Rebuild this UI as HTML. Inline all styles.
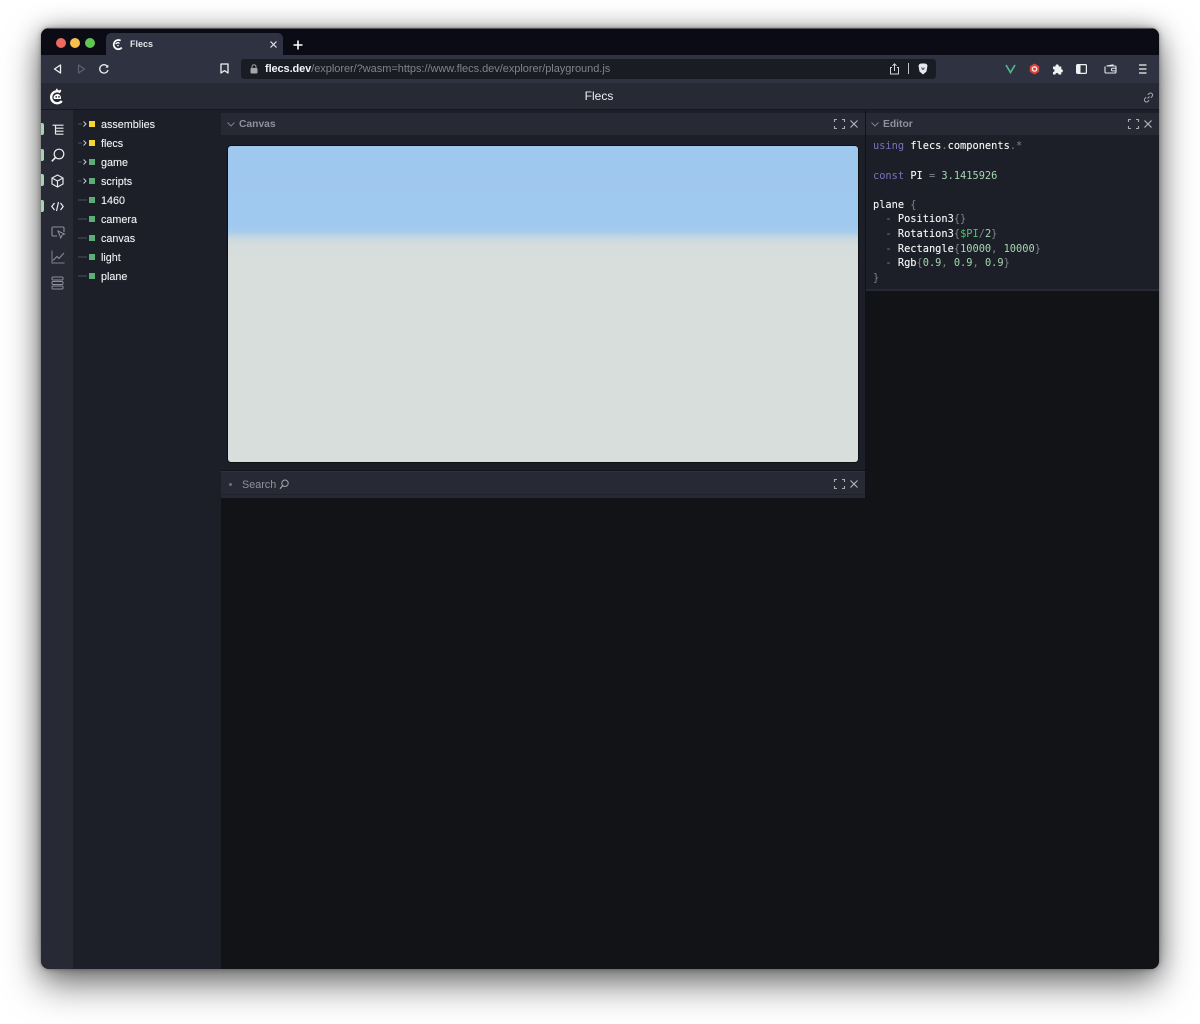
<!DOCTYPE html>
<html><head><meta charset="utf-8"><style>
html,body{margin:0;padding:0;background:#fff}
body{width:1200px;height:1024px;overflow:hidden;position:relative;font-family:"Liberation Sans",sans-serif}
.a{position:absolute}
#win{position:absolute;left:41px;top:28px;width:1118px;height:941px;border-radius:8px;overflow:hidden;background:#111317}
#shadow{position:absolute;left:41px;top:28px;width:1118px;height:941px;border-radius:8px;box-shadow:0 0 1px #666,0 0 6px rgba(0,0,0,.3),0 0 24px rgba(0,0,0,.28),0 16px 36px rgba(0,0,0,.5)}
.t{position:absolute;white-space:pre;line-height:16px}
.tree{font-size:10.8px;color:#eceef1;text-shadow:0 0 .5px rgba(236,238,241,.7)}
.sq{position:absolute;left:48px;width:6px;height:6px}
.bar{position:absolute;left:0;width:3px;height:12px;background:#9fd8b0;border-radius:0 2px 2px 0}
.code{position:absolute;left:873px;font:10.33px/14.6px "DejaVu Sans Mono",monospace;white-space:pre;color:#7f838d;top:0}
.w{color:#f4f5f6;text-shadow:0 0 .4px rgba(244,245,246,.7)}.p{color:#7e6fc0}.g{color:#a5d6b0}.gg{color:#4cc46e}
svg{position:absolute;overflow:visible;fill:none}
.panel-t{font-size:10.3px;font-weight:bold;color:#8f929c}
</style></head><body>
<div id="shadow"></div>
<div id="win">
<div class="a" style="left:0;top:0;width:1118px;height:27px;background:#0a0b14"></div>
<div class="a" style="left:0;top:0;width:1118px;height:1px;background:#555"></div>
<div class="a" style="left:65px;top:5px;width:177px;height:22px;background:#2f3241;border-radius:5px 5px 0 0"></div>
<div class="a" style="left:0;top:27px;width:1118px;height:28px;background:#2f3241"></div>
<div class="a" style="left:0;top:55px;width:1118px;height:26px;background:#272a35"></div>
<div class="a" style="left:0;top:81px;width:1118px;height:1px;background:#16181e"></div>
<div class="a" style="left:0;top:82px;width:32px;height:859px;background:#272a35"></div>
<div class="a" style="left:32px;top:82px;width:148px;height:859px;background:#1c1f27"></div>
<div class="a" style="left:180px;top:82px;width:938px;height:859px;background:#111317"></div>
<div class="a" style="left:180px;top:82px;width:644px;height:360px;background:#1c1f27"></div>
<div class="a" style="left:180px;top:85px;width:644px;height:22px;background:#272a35"></div>
<div class="a" style="left:180px;top:443px;width:644px;height:27px;background:#272a35;border-top:1px solid #2f3240;box-sizing:border-box"></div>
<div class="a" style="left:180px;top:466px;width:644px;height:1px;background:#1f2229"></div>
<div class="a" style="left:825px;top:82px;width:293px;height:179px;background:#1c1f27"></div>
<div class="a" style="left:825px;top:85px;width:293px;height:22px;background:#272a35"></div>
<div class="a" style="left:825px;top:261px;width:293px;height:2px;background:#272a35"></div>
<div class="a" style="left:187px;top:118px;width:630px;height:316px;border-radius:3px;background:linear-gradient(180deg,#9fc8ef 0,#a0c9ef 80px,#a8cdec 86px,#c8d8e2 92px,#d6dddc 100px,#d8dedb 130px,#d8dedb 100%);box-shadow:0 0 0 .5px #000"></div>
</div>

<div class="a" style="left:56px;top:38px;width:10px;height:10px;border-radius:50%;background:#ec6a5e"></div>
<div class="a" style="left:70px;top:38px;width:10px;height:10px;border-radius:50%;background:#f4bf4f"></div>
<div class="a" style="left:85px;top:38px;width:10px;height:10px;border-radius:50%;background:#61c554"></div>

<!-- tab -->
<svg style="left:112px;top:38px" width="12" height="13" viewBox="0 0 12 13"><path d="M9.8 9.6A4.6 4.6 0 1 1 8.6 2.6" stroke="#fff" stroke-width="1.8"/><path d="M3.8 6.2a2 2 0 0 1 3.6-.6" stroke="#fff" stroke-width="1.3"/><circle cx="6" cy="7.6" r=".8" fill="#fff"/></svg>
<div class="t" style="left:130px;top:36px;font-size:9px;font-weight:bold;color:#e6e7ea">Flecs</div>
<svg style="left:270px;top:41px" width="7" height="7"><path d="M.5.5l6 6M6.500.5l-6 6" stroke="#e6e7ea" stroke-width="1.200"/></svg>
<svg style="left:293px;top:40px" width="10" height="10"><path d="M5 .5v9M.5 5h9" stroke="#fff" stroke-width="1.600"/></svg>

<!-- toolbar -->
<svg style="left:53px;top:64px" width="9" height="10"><path d="M7.500 1L1.500 5l6 4z" stroke="#f0f1f3" stroke-width="1.300" stroke-linejoin="round"/></svg>
<svg style="left:77px;top:64px" width="9" height="10"><path d="M1.500 1l6 4-6 4z" stroke="#5f6270" stroke-width="1.200" stroke-linejoin="round"/></svg>
<svg style="left:99px;top:64px" width="10" height="10"><path d="M8.700 3A4.200 4.200 0 1 0 9 6" stroke="#f0f1f3" stroke-width="1.300"/><path d="M9.300.6v3H6.300z" fill="#f0f1f3"/></svg>
<svg style="left:220px;top:63px" width="9" height="11"><path d="M1 1h7v9L4.500 7.600 1 10z" stroke="#f0f1f3" stroke-width="1.300" stroke-linejoin="round"/></svg>
<div class="a" style="left:241px;top:59px;width:695px;height:20px;background:#1a1c24;border-radius:3px"></div>
<svg style="left:250px;top:64px" width="8" height="10"><rect x=".5" y="4" width="7" height="5.500" rx="1" fill="#a4a6ad"/><path d="M2 4V2.800a2 2 0 0 1 4 0V4" stroke="#a4a6ad"/></svg>
<div class="t" style="left:265px;top:61px;font-size:11px;color:#80838c;letter-spacing:-.035px"><span style="color:#f2f3f5;font-weight:bold;letter-spacing:-.1px">flecs.dev</span>/explorer/?wasm=https://www.flecs.dev/explorer/playground.js</div>
<svg style="left:889px;top:63px" width="11" height="12"><path d="M3 4.500H1.500V11h8V4.500H8M5.500 8V1M3.500 2.800l2-2 2 2" stroke="#d4d5d9" stroke-width="1"/></svg>
<div class="a" style="left:908px;top:63px;width:1px;height:11px;background:#c0c2c8"></div>
<svg style="left:918px;top:63px" width="10" height="12"><path d="M1.500 1L3 .5h4l1.500.5 1 1.500-1 6L5 11.500 1.500 8.500l-1-6z" fill="#e8e9ec"/><path d="M3 4l2 1 2-1-1 3H4z" fill="#70737c"/></svg>
<svg style="left:1005px;top:64px" width="11" height="10"><path d="M1 1l4.500 7.500L10 1" stroke="#4cb98a" stroke-width="1.700"/></svg>
<svg style="left:1029px;top:63px" width="11" height="12"><path d="M5.500.5l4.700 2.700v5.600l-4.700 2.700-4.700-2.700V3.200z" fill="#d8453e"/><circle cx="5.500" cy="6" r="2.200" stroke="#f6e6e4" stroke-width="1.400"/></svg>
<svg style="left:1052px;top:63px" width="12" height="12"><path d="M1 3.500h2.500a1.700 1.700 0 1 1 3.300 0h2.500v2.700a1.600 1.600 0 1 1 0 3.200V11.500H6.500a1.500 1.500 0 0 0-3 0H1V9a1.500 1.500 0 0 0 0-3z" fill="#f0f1f3"/></svg>
<svg style="left:1076px;top:64px" width="11" height="10"><rect x=".6" y=".6" width="9.800" height="8.800" rx="1" stroke="#f0f1f3" stroke-width="1.200"/><rect x="1" y="1" width="3.500" height="8" fill="#f0f1f3"/></svg>
<svg style="left:1104px;top:64px" width="13" height="10"><path d="M1 2.500V8a1 1 0 0 0 1 1h9a1 1 0 0 0 1-1V3a1 1 0 0 0-1-1H2.500L9.500.8" stroke="#e6e7ea" stroke-width="1.100"/><rect x="7.500" y="4.300" width="4.500" height="2.600" rx="1" fill="#2f3241" stroke="#e6e7ea"/></svg>
<svg style="left:1139px;top:64px" width="9" height="10"><path d="M0 1h7.500M0 5h7.500M0 9h7.500" stroke="#f0f1f3" stroke-width="1.300"/></svg>

<!-- app header -->
<svg style="left:49px;top:88px" width="16" height="17" viewBox="0 0 16 17"><path d="M12.800 13A6 6 0 1 1 11.400 4.200" stroke="#fff" stroke-width="2.300"/><path d="M7.500.8l1 2.400M11.500 1.800l-.6 2.200" stroke="#fff" stroke-width="1.500"/><path d="M4.500 10a3.800 3.800 0 0 1 7.500-1V11H5z" fill="#fff"/><circle cx="7.200" cy="8.900" r=".9" fill="#272a35"/><circle cx="10" cy="8.900" r=".9" fill="#272a35"/></svg>
<div class="t" style="left:500px;width:198px;text-align:center;top:88px;font-size:12px;color:#eceef0">Flecs</div>
<svg style="left:1143px;top:92px" width="11" height="11" viewBox="0 0 11 11"><path d="M4.500 6.500l2-2M4.800 2.800L6 1.600a2 2 0 0 1 3 3L7.800 5.800M6.200 8.200L5 9.400a2 2 0 0 1-3-3l1.200-1.200" stroke="#a8aab0" stroke-width="1"/></svg>

<!-- sidebar -->
<div class="bar" style="left:41px;top:123px"></div>
<div class="bar" style="left:41px;top:149px"></div>
<div class="bar" style="left:41px;top:174px"></div>
<div class="bar" style="left:41px;top:200px"></div>
<svg style="left:52px;top:124px" width="12" height="11"><path d="M.5 1.200h11M3.500 1.200v9M3.500 4.200h8M3.500 7.200h8M3.500 10.200h8" stroke="#e8e9ec" stroke-width="1.200"/></svg>
<svg style="left:51px;top:148px" width="14" height="14"><circle cx="8" cy="6" r="4.800" stroke="#eceef0" stroke-width="1.200"/><path d="M4.500 9.500L.8 13.300" stroke="#eceef0" stroke-width="1.600"/></svg>
<svg style="left:51px;top:174px" width="13" height="14"><path d="M6.500 1l5.500 3v6l-5.500 3L1 10V4zM1 4l5.500 3L12 4M6.500 7v6" stroke="#e8e9ec" stroke-width="1.200" stroke-linejoin="round"/></svg>
<svg style="left:51px;top:201px" width="13" height="11"><path d="M3.500 2L.8 5.500l2.700 3.500M9.500 2l2.700 3.500L9.500 9M7.500 1L5.500 10" stroke="#eceef0" stroke-width="1.200"/></svg>
<svg style="left:51px;top:226px" width="14" height="13"><path d="M6 10H2a1 1 0 0 1-1-1V2a1 1 0 0 1 1-1h10a1 1 0 0 1 1 1v4" stroke="#8d9099" stroke-width="1.100"/><path d="M7 5l6.500 3-2.500 1.200-1.200 2.800z" stroke="#8d9099" fill="#272a35"/></svg>
<svg style="left:51px;top:250px" width="14" height="14"><path d="M1 .5v12.500h12.500" stroke="#7f828b"/><path d="M2 10.500L6 6.500l2 2L13 3" stroke="#8d9099"/></svg>
<svg style="left:51px;top:276px" width="13" height="14"><rect x="1" y="1" width="11" height="3" rx="1" stroke="#8d9099"/><rect x="1" y="5.500" width="11" height="3" rx="1" stroke="#8d9099"/><rect x="1" y="10" width="11" height="3" rx="1" stroke="#8d9099"/></svg>

<!-- tree -->
<svg style="left:78px;top:118px" width="10" height="170" stroke="#4d505a">
<path d="M0 6h4M0 25h4M0 44h4M0 63h4M0 82h9M0 101h9M0 120h9M0 139h9M0 158h9"/>
<path d="M5.500 3.500L8 6 5.500 8.500M5.500 22.500L8 25 5.500 27.500M5.500 41.500L8 44 5.500 46.500M5.500 60.500L8 63 5.500 65.500" stroke="#c8cad0"/>
</svg>
<div class="sq" style="left:89px;top:121px;background:#f7d633"></div>
<div class="sq" style="left:89px;top:140px;background:#f7d633"></div>
<div class="sq" style="left:89px;top:159px;background:#5aae76"></div>
<div class="sq" style="left:89px;top:178px;background:#5aae76"></div>
<div class="sq" style="left:89px;top:197px;background:#5aae76"></div>
<div class="sq" style="left:89px;top:216px;background:#5aae76"></div>
<div class="sq" style="left:89px;top:235px;background:#5aae76"></div>
<div class="sq" style="left:89px;top:254px;background:#5aae76"></div>
<div class="sq" style="left:89px;top:273px;background:#5aae76"></div>
<div class="t tree" style="left:101px;top:117px">assemblies</div>
<div class="t tree" style="left:101px;top:136px">flecs</div>
<div class="t tree" style="left:101px;top:155px">game</div>
<div class="t tree" style="left:101px;top:174px">scripts</div>
<div class="t tree" style="left:101px;top:193px">1460</div>
<div class="t tree" style="left:101px;top:212px">camera</div>
<div class="t tree" style="left:101px;top:231px">canvas</div>
<div class="t tree" style="left:101px;top:250px">light</div>
<div class="t tree" style="left:101px;top:269px">plane</div>

<!-- canvas header -->
<svg style="left:227px;top:122px" width="8" height="5"><path d="M.5.500L4 4 7.500.500" stroke="#7d808a"/></svg>
<div class="t panel-t" style="left:239px;top:117px">Canvas</div>
<svg style="left:834px;top:119px" width="11" height="10"><path d="M.5 3V.5H3M8 .5h2.500V3M10.500 7v2.500H8M3 9.500H.5V7" stroke="#a6a8b0" stroke-width="1.100"/></svg>
<svg style="left:850px;top:120px" width="8" height="8"><path d="M.5.500l7 7M7.500.500l-7 7" stroke="#b6b8bf" stroke-width="1.100"/></svg>

<!-- editor header -->
<svg style="left:871px;top:122px" width="8" height="5"><path d="M.5.500L4 4 7.500.500" stroke="#7d808a"/></svg>
<div class="t panel-t" style="left:883px;top:117px">Editor</div>
<svg style="left:1128px;top:119px" width="11" height="10"><path d="M.5 3V.5H3M8 .5h2.500V3M10.500 7v2.500H8M3 9.500H.5V7" stroke="#a6a8b0" stroke-width="1.100"/></svg>
<svg style="left:1144px;top:120px" width="8" height="8"><path d="M.5.500l7 7M7.500.500l-7 7" stroke="#b6b8bf" stroke-width="1.100"/></svg>

<!-- code -->
<div class="code" style="top:139.400px"><span class="p">using</span> <span class="w">flecs</span>.<span class="w">components</span>.*

<span class="p">const</span> <span class="w">PI</span> = <span class="g">3.1415926</span>

<span class="w">plane</span> {
  - <span class="w">Position3</span>{}
  - <span class="w">Rotation3</span>{<span class="gg">$PI</span>/<span class="g">2</span>}
  - <span class="w">Rectangle</span>{<span class="g">10000</span>, <span class="g">10000</span>}
  - <span class="w">Rgb</span>{<span class="g">0.9</span>, <span class="g">0.9</span>, <span class="g">0.9</span>}
}</div>

<!-- search header -->
<div class="a" style="left:229px;top:483px;width:3px;height:3px;border-radius:50%;background:#6d707a"></div>
<div class="t" style="left:242px;top:477px;font-size:10.8px;color:#8f929c">Search</div>
<svg style="left:279px;top:479px" width="10" height="11"><circle cx="6" cy="4.200" r="3.200" stroke="#a6a8b0"/><path d="M3.500 6.800L1 9.800" stroke="#a6a8b0" stroke-width="1.200"/></svg>
<svg style="left:834px;top:479px" width="11" height="10"><path d="M.5 3V.5H3M8 .5h2.500V3M10.500 7v2.500H8M3 9.500H.5V7" stroke="#a6a8b0" stroke-width="1.100"/></svg>
<svg style="left:850px;top:480px" width="8" height="8"><path d="M.5.500l7 7M7.500.500l-7 7" stroke="#b6b8bf" stroke-width="1.100"/></svg>
</body></html>
